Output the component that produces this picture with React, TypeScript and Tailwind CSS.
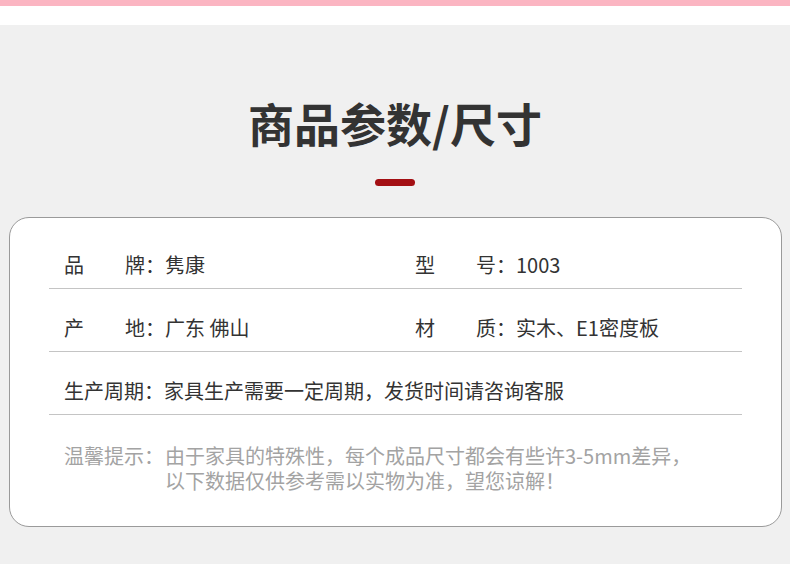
import React from 'react';

const font = { fontFamily: '"Noto Sans CJK SC", "Noto Sans", sans-serif' };

type Field = { a: string; b: string; value: string };

const rows: Field[][] = [
    [
        { a: '品', b: '牌：', value: '隽康' },
        { a: '型', b: '号：', value: '1003' },
    ],
    [
        { a: '产', b: '地：', value: '广东 佛山' },
        { a: '材', b: '质：', value: '实木、E1密度板' },
    ],
];

function Label({ field }: { field: Field }) {
    return (
        <div className="flex items-center">
            <div className="flex w-[101px] justify-between">
                <span>{field.a}</span>
                <span>{field.b}</span>
            </div>
            <span>{field.value}</span>
        </div>
    );
}

export default function App() {
    return (
        <div className="w-[790px] h-[564px] bg-[#f0f0f0] flex flex-col overflow-hidden" style={font}>
            <div className="h-[6px] bg-[#fbb5c2]" />
            <div className="h-[19px] bg-white" />

            {/* Title */}
            <div className="flex flex-col items-center pt-[67px]">
                <h1 className="text-[46px] leading-[60px] font-bold text-[#333]">商品参数/尺寸</h1>
                <div className="mt-[27px] h-[7px] w-[40px] rounded-full bg-[#a30f13]" />
            </div>

            {/* Spec card */}
            <div className="mt-[31px] ml-[9px] w-[773px] h-[310px] rounded-[20px] border border-[#9a9a9a] bg-white px-[39px] pt-[8px]">
                {rows.map((row, i) => (
                    <div
                        key={i}
                        className="h-[63px] flex items-end pb-[11px] pl-[15px] border-b border-[#c4c4c4] text-[20px] leading-[24px] text-[#333]"
                    >
                        <div className="w-[351px]">
                            <Label field={row[0]} />
                        </div>
                        <Label field={row[1]} />
                    </div>
                ))}
                <div className="h-[63px] flex items-end pb-[11px] pl-[15px] border-b border-[#c4c4c4] text-[20px] leading-[24px] text-[#333]">
                    <span>生产周期：</span>
                    <span>家具生产需要一定周期，发货时间请咨询客服</span>
                </div>

                <div className="mt-[28px] pl-[15px] flex text-[20px] leading-[25px] text-[#a3a3a3]">
                    <span className="w-[101px] shrink-0">温馨提示：</span>
                    <div className="flex flex-col">
                        <span>由于家具的特殊性，每个成品尺寸都会有些许3-5mm差异，</span>
                        <span>以下数据仅供参考需以实物为准，望您谅解！</span>
                    </div>
                </div>
            </div>
        </div>
    );
}
